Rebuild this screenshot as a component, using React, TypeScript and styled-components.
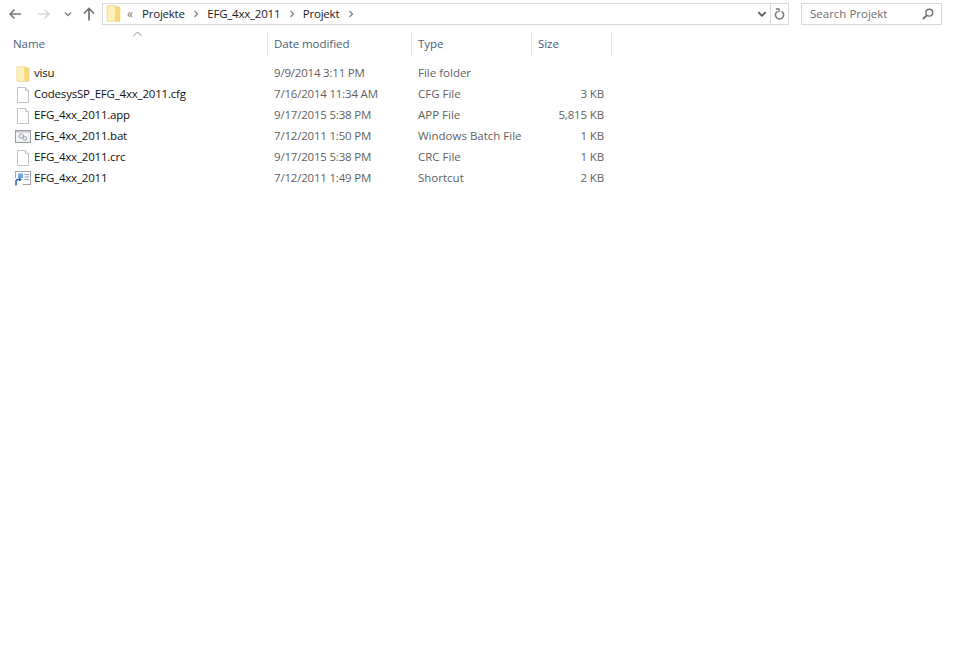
import type { FC, ReactNode } from 'react';
import { Fragment } from 'react';
import styled, { createGlobalStyle } from 'styled-components';

const GlobalStyle = createGlobalStyle`
  html, body {
    margin: 0;
    padding: 0;
    background: #fff;
  }
  body {
    font-family: "Open Sans", "Noto Sans", "Liberation Sans", sans-serif;
    font-size: 11.5px;
    color: #1a1a1a;
  }
`;

const Window = styled.div`
  width: 955px;
  height: 665px;
  overflow: hidden;
  background: #fff;
`;

const Toolbar = styled.div`
  display: flex;
  align-items: center;
  height: 21px;
  padding: 3px 14px 0 0;
`;

const NavGroup = styled.div`
  display: flex;
  align-items: center;
  width: 102px;
  flex: none;
`;

const NavButton = styled.span<{ $width: number }>`
  display: flex;
  align-items: center;
  justify-content: center;
  flex: none;
  width: ${p => p.$width}px;
  height: 21px;
`;

const ArrowSvg = styled.svg<{ $flip?: boolean }>`
  transform: ${p => (p.$flip ? 'scaleX(-1)' : 'none')};
`;

const AddressBar = styled.div`
  display: flex;
  align-items: center;
  box-sizing: border-box;
  width: 687px;
  height: 22px;
  border: 1px solid #d9d9d9;
  flex: none;
`;

const Crumbs = styled.div`
  display: flex;
  align-items: center;
  flex: 1;
  padding-left: 2px;
  color: #1a1a1a;
`;

const Crumb = styled.span`
  white-space: nowrap;
  letter-spacing: -0.22px;
`;

const CrumbArrow = styled.span`
  display: flex;
  justify-content: center;
  align-items: center;
  width: 22.5px;
  flex: none;
`;

const Overflow = styled.span`
  width: 15px;
  margin-left: 5px;
  color: #777;
  font-size: 12px;
  line-height: 1;
`;

const AddressAction = styled.span<{ $divided?: boolean }>`
  display: flex;
  align-items: center;
  justify-content: center;
  width: 17px;
  height: 20px;
  border-left: ${p => (p.$divided ? '1px solid #d9d9d9' : 'none')};
`;

const SearchBox = styled.div`
  display: flex;
  align-items: center;
  justify-content: space-between;
  box-sizing: border-box;
  width: 141px;
  height: 22px;
  margin-left: 12px;
  padding: 0 7px 0 8px;
  border: 1px solid #d9d9d9;
  color: #6d6d6d;
  flex: none;
`;

const ColumnsGrid = styled.div`
  display: grid;
  grid-template-columns: 268px 144px 120px 80px;
  width: 612px;
`;

const Header = styled(ColumnsGrid)`
  position: relative;
  height: 23px;
  margin-top: 9px;
  margin-bottom: 6px;
`;

const HeaderCell = styled.div<{ $first?: boolean }>`
  display: flex;
  align-items: center;
  box-sizing: border-box;
  padding-left: ${p => (p.$first ? 13 : 6)}px;
  padding-bottom: 2px;
  border-right: 1px solid #e5e5e5;
  color: #4c607a;
  letter-spacing: -0.05px;
`;

const SortChevron = styled.svg`
  position: absolute;
  left: 133px;
  top: -2px;
`;

const Row = styled(ColumnsGrid)`
  height: 21px;
  align-items: center;
`;

const NameCell = styled.div`
  display: flex;
  align-items: center;
  padding-left: 14px;
  color: #111;
  white-space: nowrap;
  letter-spacing: -0.2px;
`;

const IconSlot = styled.span`
  display: flex;
  align-items: center;
  justify-content: center;
  width: 17px;
  height: 17px;
  margin-top: 2px;
  margin-right: 3px;
  flex: none;
`;

const DateCell = styled.div`
  padding-left: 6px;
  color: #5f5f5f;
  white-space: nowrap;
  letter-spacing: -0.2px;
`;

const TypeCell = styled.div`
  padding-left: 6px;
  color: #5f5f5f;
  white-space: nowrap;
`;

const SizeCell = styled.div`
  padding-right: 8px;
  text-align: right;
  color: #5f5f5f;
  white-space: nowrap;
  letter-spacing: -0.14px;
`;

const FolderIcon: FC<{ size?: number }> = ({ size = 16 }) => (
  <svg width={size} height={size} viewBox="0 0 16 16">
    <path d="M2 0.8h7.5l4.5 1.4v13H2z" fill="#fbe08f" stroke="#e9cf80" strokeWidth="0.7" />
    <path d="M2.5 1.2h7v13.6h-7z" fill="#fdf0b8" />
    <path d="M9.5 1.3l4.1 1.2v12.3H9.5z" fill="#f8d878" />
  </svg>
);

const FileIcon: FC = () => (
  <svg width="16" height="16" viewBox="0 0 16 16">
    <path d="M2.5 0.5h8l3 3v12h-11z" fill="#fff" stroke="#c2c2c2" />
    <path d="M10.5 .5v3h3" fill="#f4f4f4" stroke="#c2c2c2" />
  </svg>
);

const BatchIcon: FC = () => (
  <svg width="16" height="14" viewBox="0 0 16 14">
    <rect x="0.5" y="0.5" width="15" height="12" fill="#f3f3f3" stroke="#9c9c9c" />
    <rect x="1" y="1" width="14" height="1.6" fill="#c7ccd2" />
    <circle cx="6.3" cy="6" r="2.2" fill="#e8edf2" stroke="#9aa7b4" />
    <circle cx="9.8" cy="8.4" r="1.9" fill="#e8edf2" stroke="#9aa7b4" />
  </svg>
);

const ShortcutIcon: FC = () => (
  <svg width="16" height="15" viewBox="0 0 16 15">
    <rect x="0.5" y="0.5" width="15" height="13" fill="#fbfbfb" stroke="#a5a5a5" />
    <path d="M9.5 3.5h4.5M9.5 6h4.5M9.5 8.5h4.5" stroke="#8aa0bb" />
    <rect x="3" y="2.5" width="5" height="5" fill="#6fa8e0" />
    <rect x="0" y="7" width="7.5" height="8" fill="#fff" />
    <path d="M1 14.5V10.5a2 2 0 0 1 2-2h1.5" fill="none" stroke="#1d5fb0" strokeWidth="1.5" />
    <path d="M4 6.5l3 2-3 2z" fill="#1d5fb0" />
  </svg>
);

interface FileEntry {
  name: string;
  modified: string;
  type: string;
  size: string;
  icon: ReactNode;
}

const FILES: FileEntry[] = [
  { name: 'visu', modified: '9/9/2014 3:11 PM', type: 'File folder', size: '', icon: <FolderIcon /> },
  { name: 'CodesysSP_EFG_4xx_2011.cfg', modified: '7/16/2014 11:34 AM', type: 'CFG File', size: '3 KB', icon: <FileIcon /> },
  { name: 'EFG_4xx_2011.app', modified: '9/17/2015 5:38 PM', type: 'APP File', size: '5,815 KB', icon: <FileIcon /> },
  { name: 'EFG_4xx_2011.bat', modified: '7/12/2011 1:50 PM', type: 'Windows Batch File', size: '1 KB', icon: <BatchIcon /> },
  { name: 'EFG_4xx_2011.crc', modified: '9/17/2015 5:38 PM', type: 'CRC File', size: '1 KB', icon: <FileIcon /> },
  { name: 'EFG_4xx_2011', modified: '7/12/2011 1:49 PM', type: 'Shortcut', size: '2 KB', icon: <ShortcutIcon /> },
];

const CRUMBS = ['Projekte', 'EFG_4xx_2011', 'Projekt'];

const NavArrow: FC<{ color: string; flip?: boolean }> = ({ color, flip }) => (
  <ArrowSvg $flip={flip} width="14" height="12" viewBox="0 0 14 12">
    <path d="M13 6H2M6.5 1.5L2 6l4.5 4.5" fill="none" stroke={color} strokeWidth="1.6" />
  </ArrowSvg>
);

const Chevron: FC<{ size?: number; color?: string }> = ({ size = 8, color = '#666' }) => (
  <svg width={size} height={size} viewBox="0 0 8 8">
    <path d="M1 2.5l3 3 3-3" fill="none" stroke={color} strokeWidth="1.4" />
  </svg>
);

const App: FC = () => (
  <Window>
    <GlobalStyle />
    <Toolbar>
      <NavGroup>
        <NavButton $width={30}>
          <NavArrow color="#787878" />
        </NavButton>
        <NavButton $width={28}>
          <NavArrow color="#d9d9d9" flip />
        </NavButton>
        <NavButton $width={20}>
          <Chevron color="#808080" />
        </NavButton>
        <NavButton $width={22}>
          <svg width="12" height="14" viewBox="0 0 12 14">
            <path d="M6 13.5V2M1 6.5L6 1.5l5 5" fill="none" stroke="#707070" strokeWidth="1.7" />
          </svg>
        </NavButton>
      </NavGroup>
      <AddressBar>
        <Crumbs>
          <FolderIcon size={17} />
          <Overflow>«</Overflow>
          {CRUMBS.map(crumb => (
            <Fragment key={crumb}>
              <Crumb>{crumb}</Crumb>
              <CrumbArrow>
                <svg width="6" height="8" viewBox="0 0 6 8">
                  <path d="M1.5 1l3 3-3 3" fill="none" stroke="#808080" strokeWidth="1.2" />
                </svg>
              </CrumbArrow>
            </Fragment>
          ))}
        </Crumbs>
        <AddressAction>
          <Chevron size={10} color="#555" />
        </AddressAction>
        <AddressAction $divided>
          <svg width="11" height="12" viewBox="0 0 12 13">
            <path d="M4 3a4.5 4.5 0 1 0 4.5 0" fill="none" stroke="#777" strokeWidth="1.7" transform="translate(-.2 .6)" />
            <path d="M2 1h3.5v3.5" fill="none" stroke="#777" strokeWidth="1.5" />
          </svg>
        </AddressAction>
      </AddressBar>
      <SearchBox>
        <span>Search Projekt</span>
        <svg width="12" height="12" viewBox="0 0 12 12">
          <circle cx="7.3" cy="4.7" r="3.4" fill="none" stroke="#6f6f6f" strokeWidth="1.4" />
          <path d="M4.7 7.3L1 11" stroke="#6f6f6f" strokeWidth="1.8" />
        </svg>
      </SearchBox>
    </Toolbar>
    <Header>
      <SortChevron width="9" height="6" viewBox="0 0 9 6">
        <path d="M.5 5L4.5 1l4 4" fill="none" stroke="#8f8f8f" />
      </SortChevron>
      <HeaderCell $first>Name</HeaderCell>
      <HeaderCell>Date modified</HeaderCell>
      <HeaderCell>Type</HeaderCell>
      <HeaderCell>Size</HeaderCell>
    </Header>
    {FILES.map(file => (
      <Row key={file.name}>
        <NameCell>
          <IconSlot>{file.icon}</IconSlot>
          {file.name}
        </NameCell>
        <DateCell>{file.modified}</DateCell>
        <TypeCell>{file.type}</TypeCell>
        <SizeCell>{file.size}</SizeCell>
      </Row>
    ))}
  </Window>
);

export default App;
